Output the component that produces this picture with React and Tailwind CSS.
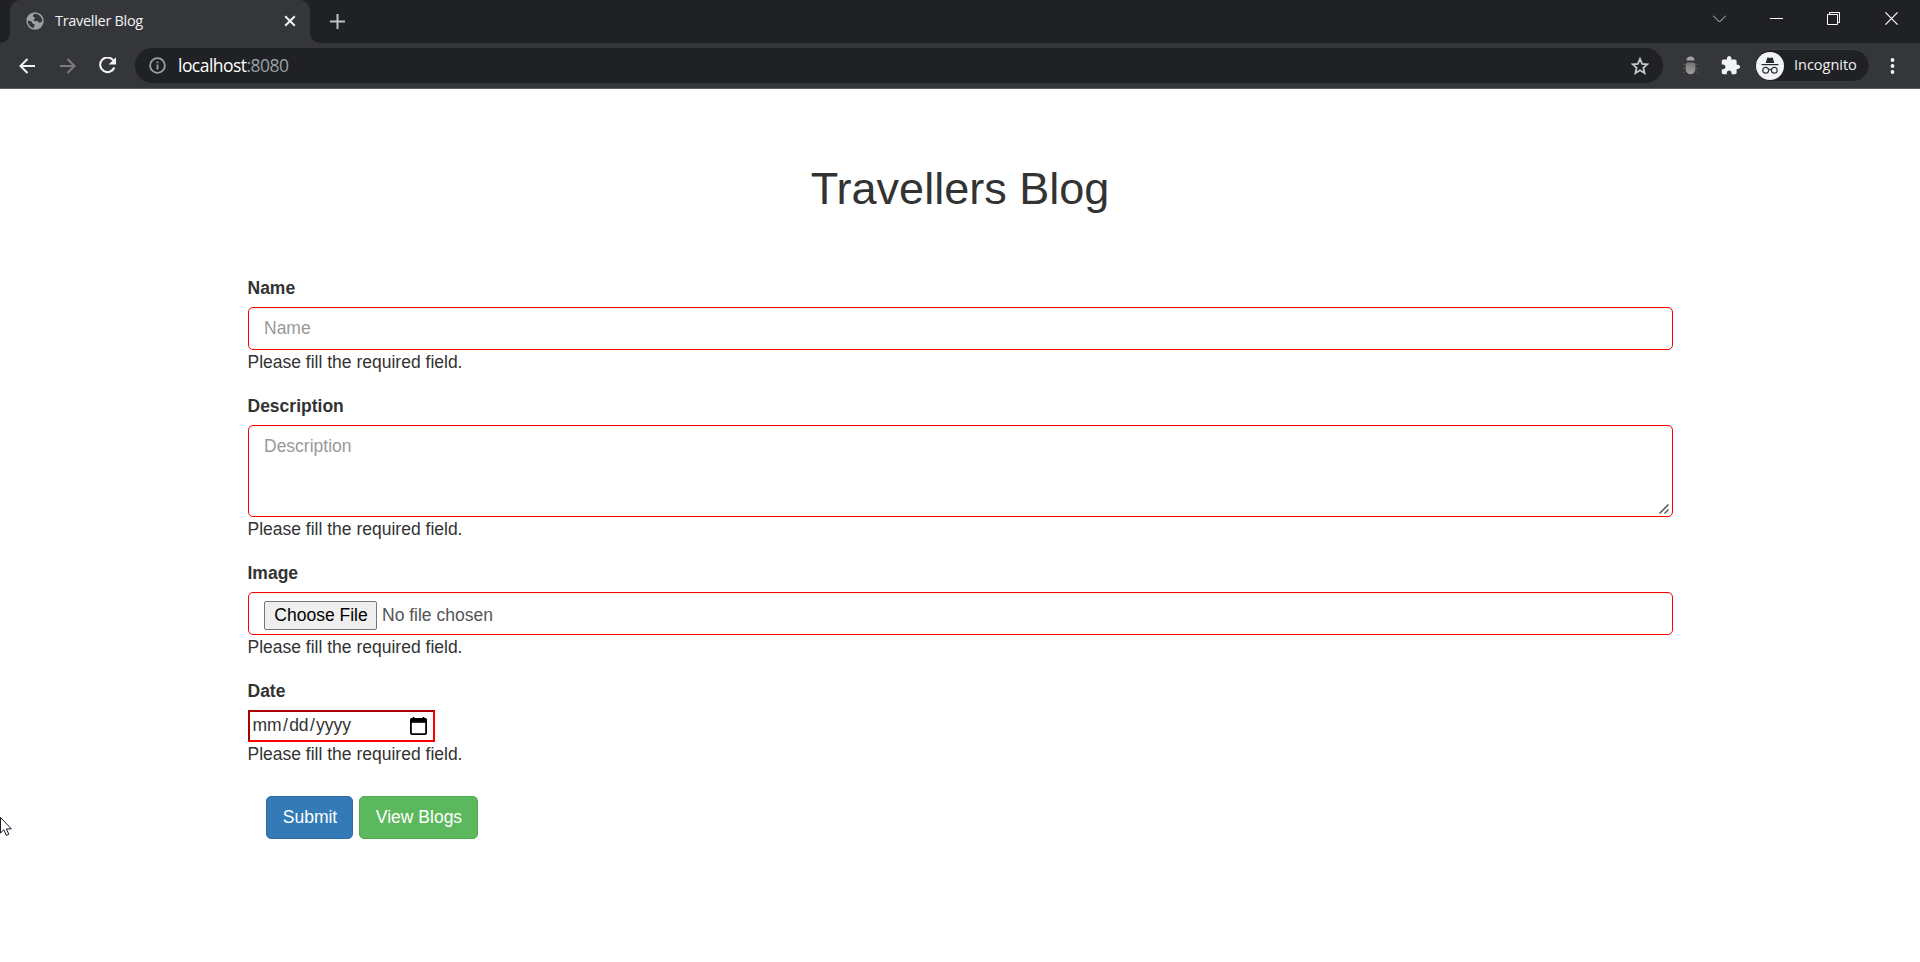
import React from "react";

function Globe() {
  return (
    <svg className="h-[18px] w-[18px] shrink-0" viewBox="0 0 18 18">
      <circle cx="9" cy="9" r="8.7" fill="#9aa0a6" />
      <path
        d="M9.4 1.8c-1.4.3-2.6 1.2-2.5 2.3.1 1.3 1.9.8 2.1 2 .2 1-1.4 1-1.3 2.1.1 1 1.7.9 3.1.9 1.5 0 1.5 1.6 2.7 1.6.9 0 1.5-.8 2.7-1.2a7.3 7.3 0 0 0-6.800-7.700zM1.700 8.700c1.500.100 3.300.100 4 .900.700.900.200 1.600 1.200 2.200.900.500 1.700.300 1.800 1.300.1.900-.9 1.200-.9 3A7.400 7.400 0 0 1 1.700 8.700z"
        fill="#35363a"
      />
    </svg>
  );
}

function TabStrip() {
  return (
    <div className="flex h-[43px] bg-[#202124]">
      <div className="flex w-[10px] items-end bg-[#35363a]">
        <div className="h-[43px] w-[10px] rounded-br-[10px] bg-[#202124]" />
      </div>
      <div className="flex h-[43px] w-[300px] items-center rounded-t-[10px] bg-[#35363a] pb-px pl-4 pr-[14px]">
        <Globe />
        <span className="ml-[11px] flex-1 whitespace-nowrap font-['Open_Sans',sans-serif] text-[14.5px] leading-5 tracking-[-0.3px] text-[#f1f3f4]">
          Traveller Blog
        </span>
        <svg className="h-3 w-3" viewBox="0 0 12 12" stroke="#f1f3f4" strokeWidth="2">
          <path d="M1.200 1.200l9.600 9.600M10.800 1.200L1.200 10.800" />
        </svg>
      </div>
      <div className="w-[10px] bg-[#35363a]">
        <div className="h-[43px] w-[10px] rounded-bl-[10px] bg-[#202124]" />
      </div>
      <div className="flex flex-1 pl-[10px] pt-[14px]">
        <svg className="h-[15px] w-[15px]" viewBox="0 0 15 15" stroke="#bdc1c6" strokeWidth="2">
          <path d="M7.500 0v15M0 7.500h15" />
        </svg>
      </div>
      <div className="flex gap-[44px] pr-[22px] pt-[12px]">
        <svg className="h-[13px] w-[13px]" viewBox="0 0 13 13" fill="none" stroke="#c9cbce">
          <path d="M0 3.500l6.500 6.500L13 3.500" />
        </svg>
        <svg className="h-[13px] w-[13px]" viewBox="0 0 13 13" stroke="#fff">
          <path d="M0 6.500h13" />
        </svg>
        <svg className="h-[13px] w-[13px]" viewBox="0 0 13 13" fill="none" stroke="#fff">
          <path d="M.5 2.500h10v10H.5zM2.500 2.500V.5h10v10h-2" />
        </svg>
        <svg className="ml-[1px] h-[13px] w-[13px]" viewBox="0 0 13 13" stroke="#fff" strokeWidth="1.200">
          <path d="M.4.400l12.200 12.200M12.600.400L.4 12.600" />
        </svg>
      </div>
    </div>
  );
}

function Toolbar() {
  return (
    <div className="flex h-[46px] items-center border-b border-[#5d5e61] bg-[#35363a] pl-[19px]">
      <svg className="h-4 w-4" viewBox="0 0 16 16" fill="none" stroke="#f1f3f4" strokeWidth="2">
        <path d="M16 8H1.500M8.500 1L1.500 8l7 7" />
      </svg>
      <svg className="ml-[25px] h-4 w-4" viewBox="0 0 16 16" fill="none" stroke="#7c7d80" strokeWidth="2">
        <path d="M0 8h14.500M7.500 1l7 7-7 7" />
      </svg>
      <svg className="ml-[23px] h-[17px] w-[17px]" viewBox="0 0 17 17">
        <path d="M14.400 3.500A7.300 7.300 0 1 0 15.300 10.500" fill="none" stroke="#f1f3f4" strokeWidth="2.100" />
        <path d="M17 .2v7.300H9.700z" fill="#f1f3f4" />
      </svg>
      <div className="ml-[19px] flex h-[35px] w-[1528px] items-center rounded-full bg-[#202124] pl-[14px] pr-[14px]">
        <svg className="h-[17px] w-[17px]" viewBox="0 0 17 17" fill="none" stroke="#9aa0a6" strokeWidth="1.800">
          <circle cx="8.500" cy="8.500" r="7.400" />
          <path d="M8.500 7.500v5M8.500 4.400v1.800" />
        </svg>
        <span className="ml-[12px] flex-1 pb-[2px] font-['Open_Sans',sans-serif] text-[17.5px] leading-6 tracking-[-0.54px] text-white">
          localhost<span className="text-[#9aa0a6]">:8080</span>
        </span>
        <svg className="h-[18px] w-[18px]" viewBox="0 0 18 18" fill="none" stroke="#c4c7ca" strokeWidth="1.800">
          <path d="M9 1.900l2.100 4.900 5.300.5-4 3.500 1.200 5.200L9 13.200 4.400 16l1.200-5.200-4-3.500 5.300-.5z" />
        </svg>
      </div>
      <svg className="ml-[19px] h-[19px] w-[17px]" viewBox="0 0 17 19">
        <defs>
          <linearGradient id="bugBody" x1="0" y1="0" x2="0" y2="1">
            <stop offset="0" stopColor="#727272" />
            <stop offset="1" stopColor="#a2a2a2" />
          </linearGradient>
        </defs>
        <path d="M1 8l3 1M1 12.500h3M1 16.500l3-1M16 8l-3 1M16 12.500h-3M16 16.500l-3-1" stroke="#505154" />
        <path d="M4.500 4.600c0-2.500 1.500-4 4-4s4 1.500 4 4z" fill="#a4a4a4" />
        <path d="M3.700 9c0-1.600.8-2.500 2.200-2.500h5.200c1.400 0 2.200.9 2.200 2.500v3.500c0 3.500-2 5.700-4.800 5.700s-4.800-2.200-4.800-5.700z" fill="url(#bugBody)" />
      </svg>
      <svg className="ml-[21px] h-[21px] w-[21px]" viewBox="0 0 24 24" fill="#f1f3f4">
        <path d="M20.500 11H19V7c0-1.100-.9-2-2-2h-4V3.500C13 2.120 11.880 1 10.500 1S8 2.120 8 3.500V5H4c-1.100 0-1.990.9-1.990 2v3.800H3.500c1.490 0 2.700 1.210 2.700 2.700s-1.210 2.700-2.700 2.700H2V20c0 1.100.9 2 2 2h3.800v-1.500c0-1.490 1.210-2.700 2.700-2.700 1.490 0 2.700 1.210 2.700 2.700V22H17c1.100 0 2-.9 2-2v-4h1.500c1.380 0 2.500-1.120 2.500-2.500S21.880 11 20.500 11z" />
      </svg>
      <div className="ml-[13px] flex h-[33px] w-[116px] items-center rounded-full border border-[#3c3d41] bg-[#202124] pl-[1px]">
        <svg className="h-[28px] w-[28px]" viewBox="0 0 28 28">
          <circle cx="14" cy="14" r="14" fill="#f1f3f4" />
          <path d="M9.700 11l1.500-5c.2-.5.500-.6 1-.400l1.800.5 1.800-.5c.5-.2.800-.1 1 .4l1.500 5z" fill="#27282b" />
          <path d="M5.500 12h17v1.200h-17z" fill="#27282b" />
          <g fill="none" stroke="#35363a" strokeWidth="1.200">
            <circle cx="9.700" cy="18.300" r="2.900" />
            <circle cx="18.300" cy="18.300" r="2.900" />
            <path d="M12.500 17.900c1-.6 2-.6 3 0" />
          </g>
        </svg>
        <span className="ml-[10px] pb-[2px] font-['Open_Sans',sans-serif] text-[14.5px] leading-5 tracking-[-0.02px] text-[#f1f3f4]">
          Incognito
        </span>
      </div>
      <svg className="ml-[20px] h-4 w-[6px]" viewBox="0 0 6 16" fill="#f1f3f4">
        <circle cx="2.500" cy="2" r="1.900" />
        <circle cx="2.500" cy="8" r="1.900" />
        <circle cx="2.500" cy="14" r="1.900" />
      </svg>
    </div>
  );
}

function Field({ label, children }) {
  return (
    <div className="mb-[19px]">
      <div className="mb-[6px] h-[25px] font-bold">{label}</div>
      {children}
      <div className="h-[25px]">Please fill the required field.</div>
    </div>
  );
}

export default function App() {
  return (
    <div className="relative h-[962px] overflow-hidden bg-white">
      <TabStrip />
      <Toolbar />
      <main className="ml-[247.5px] w-[1425px] pt-[75px] font-['Liberation_Sans',Arial,sans-serif] text-[17.5px] leading-[25px] text-[#333]">
        <h1 className="mb-[63px] h-[49px] text-center text-[45px] leading-[49px]">Travellers Blog</h1>
        <form>
          <Field label="Name">
            <input
              type="text"
              placeholder="Name"
              className="block h-[43px] w-full rounded-[5px] border border-[#f00] px-[15.5px] pb-px shadow-[inset_0_1px_1px_rgba(0,0,0,0.075)] outline-none placeholder:text-[#999]"
            />
          </Field>
          <Field label="Description">
            <div className="relative">
              <textarea
                placeholder="Description"
                className="block h-[92px] w-full resize-none rounded-[5px] border border-[#f00] px-[15.5px] py-[8px] shadow-[inset_0_1px_1px_rgba(0,0,0,0.075)] outline-none placeholder:text-[#999]"
              />
              <svg
                className="absolute bottom-[3px] right-[3.5px] h-[10px] w-[10px]"
                viewBox="0 0 10 10"
                stroke="#555"
                strokeWidth="1.500"
              >
                <path d="M.5 9.500l9-9M5.500 9.500l4-4" />
              </svg>
            </div>
          </Field>
          <Field label="Image">
            <div className="flex h-[43px] items-start rounded-[5px] border border-[#f00] pl-[15.5px] pt-[8px] text-[#555] shadow-[inset_0_1px_1px_rgba(0,0,0,0.075)]">
              <button
                type="button"
                className="h-[29px] w-[113px] rounded-[2px] border border-[#767676] bg-[#efefef] pb-px pl-px leading-[25px] text-black"
              >
                Choose File
              </button>
              <span className="ml-[5px] leading-[28px]">No file chosen</span>
            </div>
          </Field>
          <Field label="Date">
            <div className="flex h-[32px] w-[187px] items-center justify-between border-2 border-b-[#f00] border-l-[#a90000] border-r-[#f00] border-t-[#a90000] pl-[3px] pr-[6px]">
              <span className="pb-[2px]">
                mm<span className="px-[1.3px]">/</span>dd<span className="px-[1.3px]">/</span>yyyy
              </span>
              <svg className="h-[18px] w-[17px]" viewBox="0 0 17 18" fill="none" stroke="#000">
                <rect x=".9" y="2" width="15.200" height="15.100" rx="1" strokeWidth="1.800" />
                <path d="M.5 3.800h16" strokeWidth="4" />
                <path d="M3.500 0v3M13.500 0v3" strokeWidth="1.600" />
              </svg>
            </div>
          </Field>
          <div className="flex gap-[6px] pl-[18.5px] pt-[10px]">
            <button
              type="button"
              className="h-[43px] w-[87px] rounded-[5px] border border-[#2e6da4] bg-[#337ab7] pb-px pl-px text-white"
            >
              Submit
            </button>
            <button
              type="button"
              className="h-[43px] w-[119px] rounded-[5px] border border-[#4cae4c] bg-[#5cb85c] pb-px pl-px text-white"
            >
              View Blogs
            </button>
          </div>
        </form>
      </main>
      <svg className="absolute left-0 top-[817px] h-[20px] w-[13px]" viewBox="0 0 13 20">
        <path d="M.5.500v15.500l3.400-3.200 2.400 5.600 2.500-1.100-2.400-5.400h5z" fill="#fff" stroke="#1a1a2a" />
      </svg>
    </div>
  );
}
